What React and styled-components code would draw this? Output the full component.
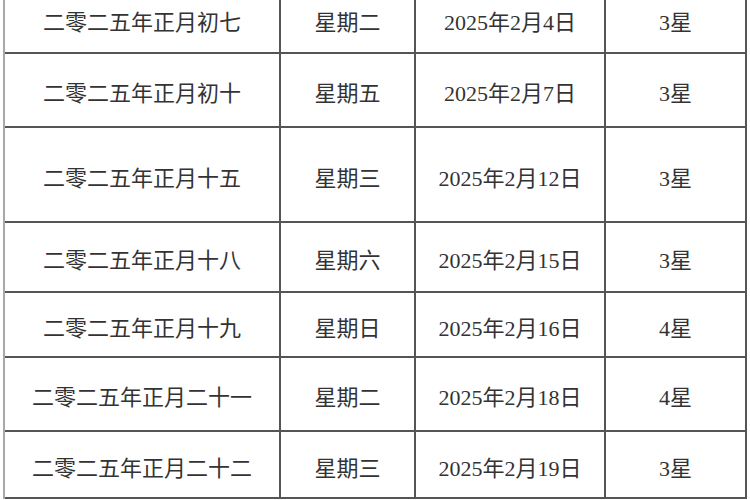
import React from 'react';
import styled, { createGlobalStyle } from 'styled-components';

const GlobalStyle = createGlobalStyle`
  html, body {
    margin: 0;
    padding: 0;
    background: #ffffff;
    overflow: hidden;
  }
`;

const Page = styled.div`
  width: 750px;
  height: 500px;
  overflow: hidden;
  background: #ffffff;
`;

// grid lines come from the container background showing through the gaps
const Grid = styled.div`
  display: grid;
  grid-template-columns: 274px 133px 188px 139px;
  grid-auto-rows: auto;
  gap: 2px;
  width: 740px;
  margin: -16px 0 0 3px;
  padding: 2px 2px 2px 0;
  border-left: 2px solid #a8a8a8;
  background: #555555;
  font-family: "Liberation Serif", "Noto Sans CJK SC", serif;
  font-size: 22px;
  color: #333333;
`;

const Cell = styled.div`
  height: ${(p) => p.$h}px;
  display: flex;
  align-items: center;
  justify-content: center;
  padding-top: 2px;
  box-sizing: border-box;
  background: #ffffff;
  white-space: nowrap;
`;

const rows = [
  { h: 66, lunar: '二零二五年正月初七', week: '星期二', date: '2025年2月4日', star: '3星' },
  { h: 72, lunar: '二零二五年正月初十', week: '星期五', date: '2025年2月7日', star: '3星' },
  { h: 93, lunar: '二零二五年正月十五', week: '星期三', date: '2025年2月12日', star: '3星' },
  { h: 68, lunar: '二零二五年正月十八', week: '星期六', date: '2025年2月15日', star: '3星' },
  { h: 63, lunar: '二零二五年正月十九', week: '星期日', date: '2025年2月16日', star: '4星' },
  { h: 72, lunar: '二零二五年正月二十一', week: '星期二', date: '2025年2月18日', star: '4星' },
  { h: 65, lunar: '二零二五年正月二十二', week: '星期三', date: '2025年2月19日', star: '3星' },
];

const App = () => {
  return (
    <Page>
      <GlobalStyle />
      <Grid>
        {rows.map((r, i) => (
          <React.Fragment key={i}>
            <Cell $h={r.h}>{r.lunar}</Cell>
            <Cell $h={r.h}>{r.week}</Cell>
            <Cell $h={r.h}>{r.date}</Cell>
            <Cell $h={r.h}>{r.star}</Cell>
          </React.Fragment>
        ))}
      </Grid>
    </Page>
  );
};

export default App;
